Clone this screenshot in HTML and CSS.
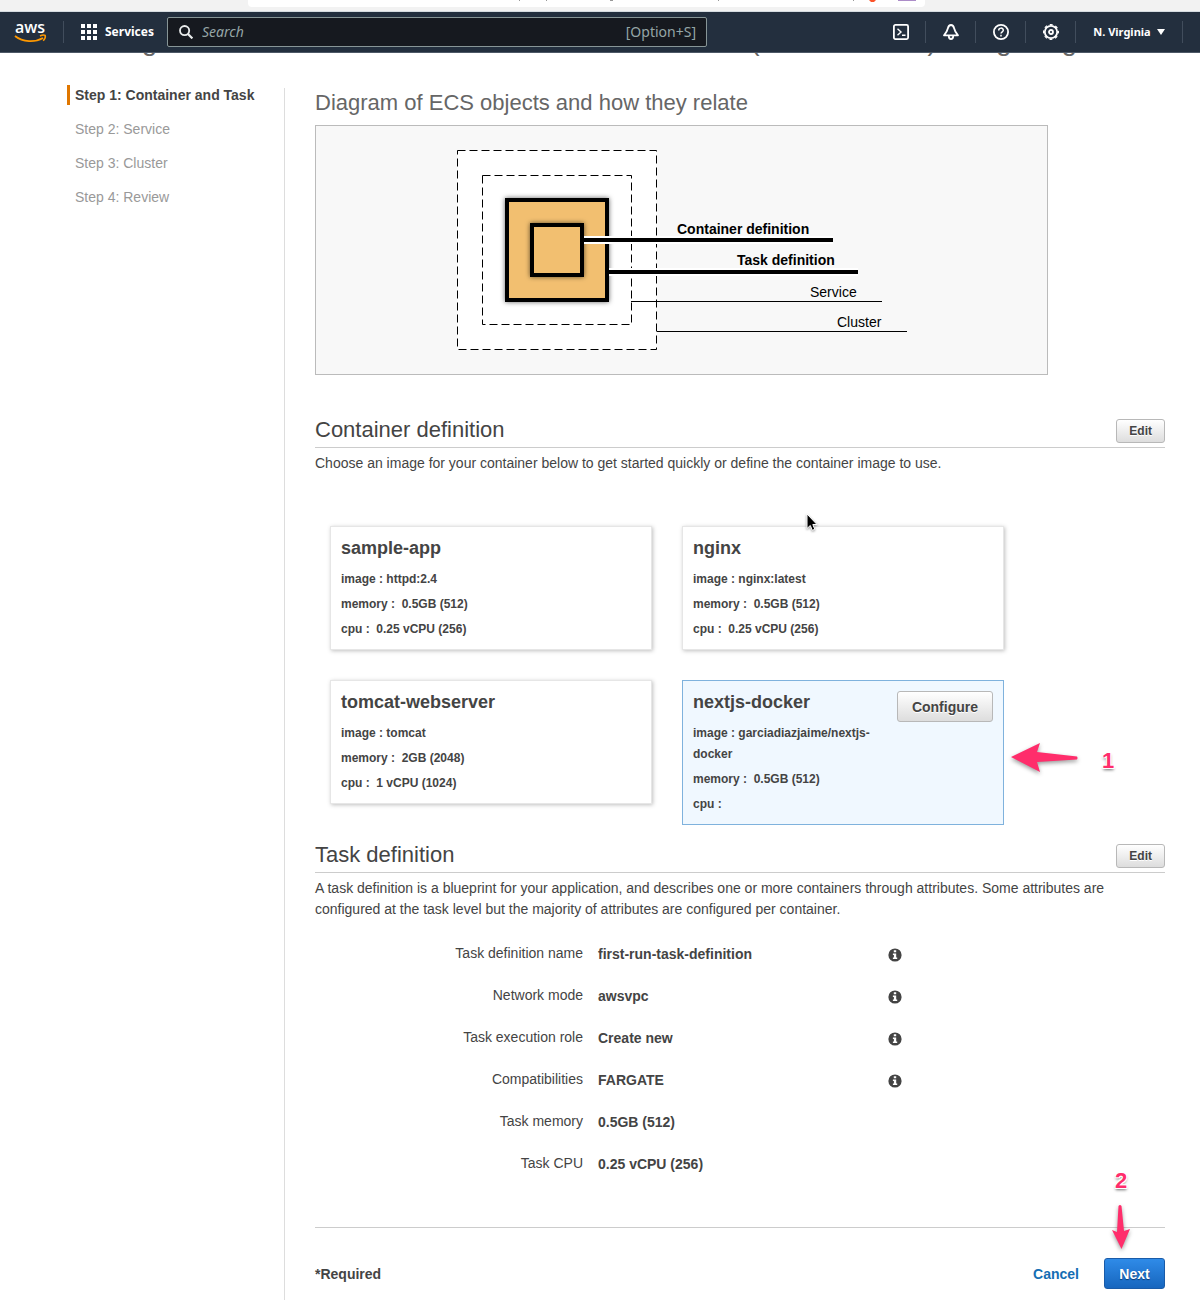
FILE: index.html
```html
<!DOCTYPE html>
<html lang="en">
<head>
<meta charset="utf-8">
<title>Amazon ECS</title>
<link rel="stylesheet" href="styles.css">
</head>
<body>
<svg width="0" height="0" class="defs" aria-hidden="true">
  <symbol id="info" viewBox="0 0 14 14">
    <circle cx="7" cy="7" r="6.6" fill="#444"/>
    <path d="M5.8 2.3h2.4v1.9H5.8zM4.9 5.4h3.3v4.2h1v1.5H4.9V9.6h1V6.9h-1z" fill="#fff"/>
  </symbol>
</svg>
<div class="browser">
  <div class="tab">
    <svg width="677" height="2" viewBox="0 0 677 2" aria-hidden="true">
      <path d="M271 0h1v1h-1zM298 0h1v1h-1zM362 0h3v1h-3zM470 0h1v1h-1zM605 0h1v1h-1z" fill="#999"/>
      <path d="M621 0h7l-2 2h-3z" fill="#fb542b"/>
      <path d="M650 0h18v1h-18z" fill="#ac8cc8"/>
    </svg>
  </div>
</div>
<header class="topbar">
  <a class="logo" href="#" aria-label="AWS home">
    <svg width="36" height="40" viewBox="0 0 36 40">
      <text x="1" y="21" class="logo-text">aws</text>
      <path d="M1 24C9 30.500 21 30.500 29 26" fill="none" stroke="#f90" stroke-width="1.800"/>
      <path d="M26 24c2-1 4.500-1 5.200-.6.3 1-.3 3.600-2 5.400" fill="none" stroke="#f90" stroke-width="1.500"/>
    </svg>
  </a>
  <button class="services" type="button">
    <svg width="16" height="16" viewBox="0 0 16 16" fill="#fff"><path d="M0 0h4v4H0zM6 0h4v4H6zM12 0h4v4h-4zM0 6h4v4H0zM6 6h4v4H6zM12 6h4v4h-4zM0 12h4v4H0zM6 12h4v4H6zM12 12h4v4h-4z"/></svg>
    Services
  </button>
  <label class="search">
    <svg width="14" height="14" viewBox="0 0 14 14" fill="none" stroke="#eaeded" stroke-width="1.800"><circle cx="5.600" cy="5.600" r="4.600"/><path d="M9 9l4.400 4.400" stroke-width="2.200"/></svg>
    <input type="search" placeholder="Search" aria-label="Search">
    <span>[Option+S]</span>
  </label>
  <nav class="tools">
    <button type="button" aria-label="CloudShell"><svg width="16" height="16" viewBox="0 0 16 16" fill="none" stroke="#fff" stroke-width="1.800"><rect x=".9" y=".9" width="14.200" height="14.200" rx="1.500"/><path d="M4.500 4.800L8 8l-3.500 3.200M9 11.300h3.500" stroke-width="1.400"/></svg></button>
    <button type="button" aria-label="Notifications"><svg width="16" height="16" viewBox="0 0 16 16" fill="none" stroke="#fff" stroke-width="1.800" stroke-linejoin="round"><path d="M8 1C6.300 1 5.300 2.400 4.900 4.300 4.300 7 3 9.200 1 11.300h14C13 9.200 11.700 7 11.100 4.300 10.700 2.400 9.700 1 8 1z"/><path d="M5.800 12c0 4 4.400 4 4.400 0"/></svg></button>
    <button type="button" aria-label="Help"><svg width="16" height="16" viewBox="0 0 16 16" fill="none" stroke="#fff" stroke-width="1.800"><circle cx="8" cy="8" r="7.100"/><path d="M5.700 6.400c0-3 4.600-3 4.600-.2C10.300 7.800 8 7.800 8 9.600M8 10.800v1.600" stroke-width="1.500"/></svg></button>
    <button type="button" aria-label="Settings"><svg width="16" height="16" viewBox="0 0 16 16" fill="none" stroke="#fff"><circle cx="8" cy="8" r="6.200" stroke-width="1.800"/><circle cx="8" cy="8" r="7.400" stroke-width="1.200" stroke-dasharray="3 2.810" stroke-dashoffset="1.500"/><circle cx="8" cy="8" r="2" stroke-width="1.800"/></svg></button>
    <button type="button" class="region">N. Virginia <svg width="8" height="6" viewBox="0 0 8 6"><path d="M0 0h8L4 6z" fill="#fff"/></svg></button>
  </nav>
</header>
<h1 class="page-title">Getting Started with Amazon Elastic Container Service (Amazon ECS) using Fargate</h1>
<div class="layout">
  <nav class="steps">
    <a href="#" class="current">Step 1: Container and Task</a>
    <a href="#">Step 2: Service</a>
    <a href="#">Step 3: Cluster</a>
    <a href="#">Step 4: Review</a>
  </nav>
  <main>
    <h2 class="diagram-title">Diagram of ECS objects and how they relate</h2>
    <div class="diagram">
      <svg width="731" height="248" viewBox="1 1 731 248">
        <defs><filter id="glow" x="-20%" y="-20%" width="140%" height="140%"><feDropShadow dx="0" dy="0" stdDeviation="2.500" flood-color="#000" flood-opacity=".6"/></filter></defs>
        <g fill="#fff" stroke="#000" stroke-dasharray="8 4">
          <rect x="142.500" y="25.500" width="199" height="199"/>
          <rect x="167.500" y="50.500" width="149" height="149"/>
        </g>
        <g fill="#f2bf6f" stroke="#000" stroke-width="4">
          <rect x="192" y="75" width="100" height="100" filter="url(#glow)"/>
          <rect x="217" y="100" width="50" height="50" filter="url(#glow)"/>
        </g>
        <path d="M269 111h249v8H269zM294 143h249v8H294z" fill="#fff"/>
        <path d="M269 113h249v4H269zM294 145h249v4H294zM316 176h251v1H316zM342 206h250v1H342z"/>
        <g class="diagram-text">
          <text x="362" y="109" class="strong">Container definition</text>
          <text x="422" y="140" class="strong">Task definition</text>
          <text x="495" y="172">Service</text>
          <text x="522" y="202">Cluster</text>
        </g>
      </svg>
    </div>
    <section class="containers">
      <div class="section-head"><h2>Container definition</h2><button type="button" class="btn small">Edit</button></div>
      <p>Choose an image for your container below to get started quickly or define the container image to use.</p>
      <div class="cards">
        <article class="card"><div><h3>sample-app</h3><p>image : httpd:2.4</p><p>memory : &nbsp;0.5GB (512)</p><p>cpu : &nbsp;0.25 vCPU (256)</p></div></article>
        <article class="card"><div><h3>nginx</h3><p>image : nginx:latest</p><p>memory : &nbsp;0.5GB (512)</p><p>cpu : &nbsp;0.25 vCPU (256)</p></div>
          <svg class="cursor" width="14" height="20" viewBox="0 0 14 20" aria-hidden="true"><path d="M2 1v14.500l3.300-3 2 4.800 2.500-1-2-4.800H12z" stroke="#fff" stroke-width="1"/></svg>
        </article>
        <article class="card"><div><h3>tomcat-webserver</h3><p>image : tomcat</p><p>memory : &nbsp;2GB (2048)</p><p>cpu : &nbsp;1 vCPU (1024)</p></div></article>
        <article class="card selected"><div><h3>nextjs-docker</h3><p>image : garciadiazjaime/nextjs-docker</p><p>memory : &nbsp;0.5GB (512)</p><p>cpu :</p></div>
          <button type="button" class="btn">Configure</button>
          <div class="note note-one"><svg width="68" height="32" viewBox="0 0 68 32"><path d="M0 15L29 1l-3 9L66 14.500q1 1.500 0 3L26 20l3 10z"/></svg><span>1</span></div>
        </article>
      </div>
    </section>
    <section class="task">
      <div class="section-head"><h2>Task definition</h2><button type="button" class="btn small">Edit</button></div>
      <p>A task definition is a blueprint for your application, and describes one or more containers through attributes. Some attributes are configured at the task level but the majority of attributes are configured per container.</p>
      <dl class="details">
        <div><dt>Task definition name</dt><dd>first-run-task-definition</dd><svg class="info"><use href="#info"/></svg></div>
        <div><dt>Network mode</dt><dd>awsvpc</dd><svg class="info"><use href="#info"/></svg></div>
        <div><dt>Task execution role</dt><dd>Create new</dd><svg class="info"><use href="#info"/></svg></div>
        <div><dt>Compatibilities</dt><dd>FARGATE</dd><svg class="info"><use href="#info"/></svg></div>
        <div><dt>Task memory</dt><dd>0.5GB (512)</dd></div>
        <div><dt>Task CPU</dt><dd>0.25 vCPU (256)</dd></div>
      </dl>
    </section>
    <footer class="actions">
      <strong>*Required</strong>
      <a href="#">Cancel</a>
      <button type="button" class="btn primary">Next</button>
      <div class="note note-two"><span>2</span><svg width="20" height="46" viewBox="0 0 20 46"><path d="M7.500 2q1.500-2 3 0l2.500 25 6-2-8.500 20L1 26l5 2z"/></svg></div>
    </footer>
  </main>
</div>
</body>
</html>
```
FILE: styles.css
```css
* { box-sizing: border-box; }
body {
  margin: 0;
  font: 14px/21px "Liberation Sans", Arial, sans-serif;
  color: #444;
  background: #fff;
}
h1, h2, h3, p, dl, dd { margin: 0; }
a { text-decoration: none; }
button { font: inherit; color: inherit; cursor: pointer; }
svg { display: block; flex: none; }
.defs { position: absolute; }

.browser { height: 12px; padding: 0 275px 0 248px; background: #f2f2f2; border-bottom: 1px solid #d5dbe0; }
.tab { height: 7px; background: #fff; border-radius: 0 0 4px 4px; overflow: hidden; }

.topbar {
  position: sticky;
  top: 0;
  z-index: 5;
  display: flex;
  align-items: center;
  height: 41px;
  padding: 0 17px 0 14px;
  background: #232f3e;
  border-bottom: 1px solid #4d5866;
  color: #fff;
  font: bold 12px/16px "Noto Sans", "Open Sans", sans-serif;
}
.topbar button { display: flex; align-items: center; padding: 0; border: 0; background: none; }
.logo { display: flex; align-items: center; width: 50px; height: 22px; border-right: 1px solid #414d5c; }
.logo-text { font: 600 16px "Open Sans", sans-serif; fill: #fff; }
.topbar .services { gap: 8px; width: 103px; padding-left: 17px; white-space: nowrap; }
.search {
  display: flex;
  align-items: center;
  gap: 9px;
  flex: 0 1 540px;
  height: 30px;
  padding: 0 10px 0 11px;
  background: #16191f;
  border: 1px solid #879596;
  border-radius: 2px;
  color: #95a5a6;
  font-size: 14px;
  font-weight: 400;
}
.search input { flex: 1; min-width: 0; padding: 0; border: 0; outline: 0; background: none; color: #fff; font: inherit; }
.search input::placeholder { color: #95a5a6; font-style: italic; opacity: 1; }
.tools { display: flex; margin-left: auto; }
.tools button { justify-content: center; width: 50px; height: 22px; border-right: 1px solid #414d5c; }
.tools .region { gap: 6px; width: 107px; font-size: 11px; white-space: nowrap; }

.page-title {
  margin: -27px 0 32px;
  padding-left: 67px;
  font-size: 28px;
  font-weight: 400;
  line-height: 30px;
  color: #666;
  white-space: nowrap;
  overflow: hidden;
}

.layout { display: flex; min-height: 1212px; padding: 0 35px 0 67px; }
.steps { display: flex; flex-direction: column; gap: 14px; flex: 0 0 217px; margin-top: -3px; }
.steps a { padding-left: 5px; border-left: 3px solid transparent; line-height: 20px; color: #999; }
.steps .current { border-color: #e07700; color: #444; font-weight: bold; }
main { flex: 1; min-width: 0; padding: 0 0 11px 30px; border-left: 1px solid #ddd; }

h2 { font-size: 22px; font-weight: 400; line-height: 22px; }
.diagram-title { margin-bottom: 7px; line-height: 30px; color: #666; }
.diagram { max-width: 733px; background: #f8f8f8; border: 1px solid #bbb; overflow: hidden; }
.diagram-text { font-size: 14px; }
.strong { font-weight: bold; }

.section-head { display: flex; justify-content: space-between; padding-bottom: 4px; margin-bottom: 5px; border-bottom: 1px solid #ccc; }
.containers { margin-top: 44px; }
.cards { display: grid; grid-template-columns: repeat(2, minmax(0, 322px)); align-items: start; gap: 30px; margin: 52px 0 0 15px; }
.card {
  position: relative;
  display: flex;
  justify-content: space-between;
  gap: 10px;
  padding: 10px 10px 9px;
  border: 1px solid #e6e6e6;
  box-shadow: 1px 1px 4px rgba(0, 0, 0, .25);
  font-size: 12px;
  font-weight: bold;
}
.card > div:first-child { flex: 0 1 190px; }
.card h3 { margin-bottom: 9px; font-size: 18px; line-height: 23px; }
.card p + p { margin-top: 4px; }
.selected { background: #f0f8ff; border-color: #7fb2dd; box-shadow: none; }
.btn {
  flex: none;
  align-self: flex-start;
  height: 31px;
  padding: 2px 14px 0;
  border: 1px solid #b8b8b8;
  border-radius: 3px;
  background: linear-gradient(#fff, #ddd);
  font-size: 14px;
  font-weight: bold;
  line-height: 21px;
  text-shadow: 0 1px 0 #fff;
}
.small { height: 24px; padding: 0 12px; font-size: 12px; }
.primary { min-width: 61px; border-color: #1a5ba8; background: linear-gradient(#2f8be8, #1766be); color: #fff; text-shadow: 0 1px 1px #0a3a70; }
.cursor { position: absolute; left: 122px; top: -14px; filter: drop-shadow(0 1px 1px rgba(0, 0, 0, .4)); }

.task { margin-top: 19px; }
.details { display: grid; gap: 19px; margin-top: 23px; }
.details > div { display: grid; grid-template-columns: 268px 275px 14px; column-gap: 15px; align-items: start; }
.details dt { text-align: right; }
.details dd { font-weight: bold; line-height: 23px; }
.details .info { width: 14px; height: 14px; align-self: center; }

.actions {
  position: relative;
  display: flex;
  align-items: baseline;
  gap: 25px;
  margin-top: 51px;
  padding-top: 30px;
  border-top: 1px solid #ccc;
}
.actions strong { margin-right: auto; }
.actions a { color: #146eb4; font-weight: bold; }
.actions .btn { align-self: baseline; }

.note { position: absolute; display: flex; align-items: center; font-size: 22px; font-weight: bold; line-height: 24px; color: #ff2d6b; fill: #ff2d6b; }
.note span { text-shadow: -1px -1px 0 #fff, 1px -1px 0 #fff, -1px 1px 0 #fff, 1px 1px 0 #fff, 0 2px 3px rgba(0, 0, 0, .6); }
.note svg { filter: drop-shadow(0 2px 2px rgba(0, 0, 0, .4)); }
.note-one { left: 328px; top: 61px; gap: 23px; }
.note-one span { padding-top: 6px; }
.note-two { right: 34px; top: -59px; flex-direction: column; gap: 11px; }
```
